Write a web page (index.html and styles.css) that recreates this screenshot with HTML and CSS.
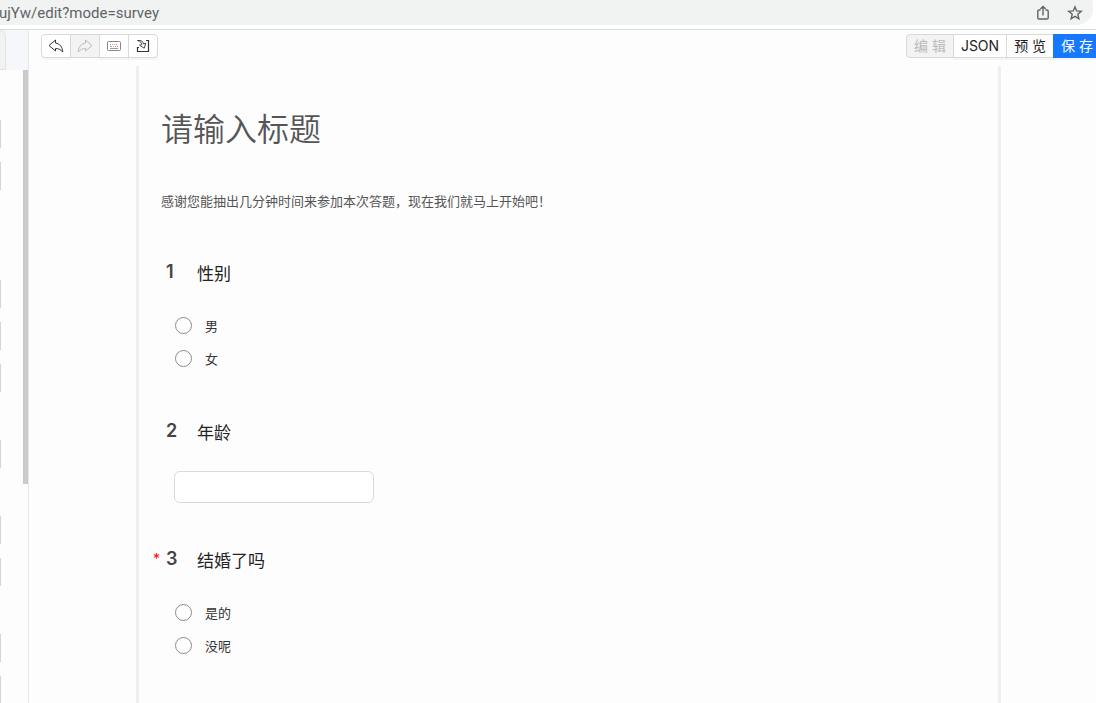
FILE: index.html
```html
<!DOCTYPE html>
<html lang="zh-CN">
<head>
  <meta charset="UTF-8" />
  <meta name="viewport" content="width=device-width, initial-scale=1.0"/>
  <title>survey</title>
  <link rel="stylesheet" href="styles.css">
</head>
<body>

  <header class="browser-bar">
    <div class="address">
      <div class="url"><span>6ujYw/edit?mode=survey</span></div>
      <div class="address-icons">
        <svg width="16" height="16" viewBox="0 0 16 16" fill="none" stroke="#5f6368" stroke-width="1.4">
          <path d="M5.500 5H4q-1.200 0-1.200 1.200v6.600q0 1.200 1.200 1.200h8q1.200 0 1.200-1.200V6.200Q13.200 5 12 5h-1.500M8 10.500V1.600M5.400 4L8 1.400 10.600 4"/>
        </svg>
        <svg width="16" height="16" viewBox="0 0 16 16" fill="none" stroke="#5f6368" stroke-width="1.4">
          <path d="M8 1.900l1.700 4 4.600.400-3.500 3 1.100 4.500L8 11.400l-3.900 2.400 1.100-4.500-3.500-3 4.600-.4z"/>
        </svg>
      </div>
    </div>
  </header>

  <div class="app">
    <aside class="sidebar">
      <div class="tabs"><div class="tab"></div></div>
      <div class="components">
        <div class="list">
          <div class="group first">
            <div class="item"></div>
            <div class="item"></div>
          </div>
          <div class="group">
            <div class="item"></div>
            <div class="item"></div>
            <div class="item"></div>
          </div>
          <div class="group">
            <div class="item"></div>
          </div>
          <div class="group">
            <div class="item"></div>
            <div class="item"></div>
          </div>
          <div class="group">
            <div class="item"></div>
            <div class="item"></div>
          </div>
        </div>
        <div class="scrollbar"></div>
      </div>
    </aside>

    <main class="workspace">
      <div class="toolbar">
        <div class="btn-group">
          <button class="btn icon-btn" aria-label="撤销">
            <svg width="16" height="16" viewBox="0 0 16 16" fill="none" stroke="#333" stroke-width="1" stroke-linejoin="round">
              <path d="M1 7.500L7.500 2v3c4.500.8 7 4 7.200 9-1.700-2.300-4-3.500-7.200-3.500V13z"/>
            </svg>
          </button>
          <button class="btn icon-btn" aria-label="重做" disabled>
            <svg width="16" height="16" viewBox="0 0 16 16" fill="none" stroke="#bbb" stroke-width="1" stroke-linejoin="round">
              <path d="M15 7.500L8.500 2v3c-4.500.8-7 4-7.200 9 1.700-2.300 4-3.500 7.200-3.500V13z"/>
            </svg>
          </button>
          <button class="btn icon-btn" aria-label="快捷键">
            <svg width="16" height="16" viewBox="0 0 16 16" fill="none">
              <rect x="1.500" y="3.500" width="13" height="9" rx="1" stroke="#888"/>
              <path d="M4 6.500h2m4 0h2M4 8.500h1m6 0h1" stroke="#999" stroke-dasharray="1 1"/>
              <path d="M6 6.500h4M5 8.500h6" stroke="#e0a080" stroke-dasharray="1 1"/>
              <path d="M4 10.500h8" stroke="#999"/>
            </svg>
          </button>
          <button class="btn icon-btn" aria-label="导入">
            <svg width="16" height="16" viewBox="0 0 16 16" fill="none" stroke="#333">
              <path d="M4 9.500H2.500V13.500h11V2.500H11" stroke-width="1.200"/>
              <path d="M2.500 2.500c3.500-.5 5.800 1 6 3.500l2.300-.6-1.600 4.800-4.600-3 2.200-.6C6.500 4.500 5 3 2.500 2.500z" stroke-width=".9" stroke-linejoin="round"/>
            </svg>
          </button>
        </div>
        <div class="btn-group modes">
          <button class="btn" disabled>编 辑</button>
          <button class="btn">JSON</button>
          <button class="btn">预 览</button>
          <button class="btn primary">保 存</button>
        </div>
      </div>

      <form class="survey">
        <h1>请输入标题</h1>
        <p class="intro">感谢您能抽出几分钟时间来参加本次答题，现在我们就马上开始吧！</p>

        <fieldset class="question">
          <legend><span class="required"></span><span class="number">1</span><span>性别</span></legend>
          <label class="option"><input type="radio" name="gender">男</label>
          <label class="option"><input type="radio" name="gender">女</label>
        </fieldset>

        <div class="question">
          <label class="title" for="age"><span class="required"></span><span class="number">2</span><span>年龄</span></label>
          <input class="text-input" type="text" id="age">
        </div>

        <fieldset class="question">
          <legend><span class="required">*</span><span class="number">3</span><span>结婚了吗</span></legend>
          <label class="option"><input type="radio" name="married">是的</label>
          <label class="option"><input type="radio" name="married">没呢</label>
        </fieldset>
      </form>
    </main>
  </div>

</body>
</html>
```
FILE: styles.css
```css
* {
  box-sizing: border-box;
}

body {
  margin: 0;
  height: 100vh;
  overflow: hidden;
  display: flex;
  flex-direction: column;
  font-family: Inter, "Noto Sans CJK SC", sans-serif;
  font-size: 13px;
  color: #333;
  background: #fdfdfd;
}

.browser-bar {
  flex: none;
  height: 30px;
  padding-right: 3px;
  border-bottom: 1px solid #d9dbda;
  background: #fff;
}

.address {
  height: 25px;
  padding-right: 10px;
  display: flex;
  align-items: center;
  justify-content: space-between;
  background: #f1f3f2;
  border-radius: 0 0 16px 0;
}

.url {
  width: 159px;
  display: flex;
  justify-content: flex-end;
  white-space: nowrap;
  font-family: Roboto, sans-serif;
  font-size: 15px;
  line-height: 24px;
  color: #5f6368;
}

.address-icons {
  display: flex;
  gap: 16px;
}

.app {
  flex: 1;
  min-height: 0;
  display: flex;
}

.sidebar {
  width: 29px;
  flex: none;
  display: flex;
  flex-direction: column;
  border-right: 1px solid #e8e8e8;
}

.tabs {
  flex: none;
  height: 40px;
  background: #f5f7fa;
}

.tab {
  width: 6px;
  height: 40px;
  background: #f1f3f2;
  border: 1px solid #e2e4e3;
  border-left: none;
  border-radius: 0 6px 0 0;
}

.components {
  flex: 1;
  min-height: 0;
  display: flex;
  justify-content: space-between;
  overflow: hidden;
}

.list {
  padding-top: 50px;
}

.group {
  display: flex;
  flex-direction: column;
  gap: 14px;
  margin-bottom: 48px;
}

.group.first {
  margin-bottom: 90px;
}

.item {
  width: 1px;
  height: 28px;
  background: #d4d4d4;
}

.scrollbar {
  width: 5px;
  height: 414px;
  background: #cacaca;
}

.workspace {
  flex: 1;
  min-width: 0;
  display: flex;
  flex-direction: column;
}

.toolbar {
  flex: none;
  display: flex;
  justify-content: space-between;
  padding: 4px 0 8px 12px;
}

.btn-group {
  display: flex;
}

.btn {
  height: 24px;
  margin: 0 0 0 -1px;
  padding: 0 7px;
  display: flex;
  align-items: center;
  justify-content: center;
  white-space: nowrap;
  font-family: inherit;
  font-size: 14px;
  line-height: 20px;
  color: #222;
  background: #fff;
  border: 1px solid #d9d9d9;
  box-shadow: 0 2px 0 rgba(0, 0, 0, 0.03);
  cursor: pointer;
}

.btn:first-child {
  margin-left: 0;
  border-radius: 4px 0 0 4px;
}

.btn:last-child {
  border-radius: 0 4px 4px 0;
}

.btn:disabled {
  color: #bbb;
  background: #f2f3f2;
  box-shadow: none;
  cursor: not-allowed;
}

.icon-btn {
  width: 30px;
  padding: 0;
}

.btn.primary {
  padding-right: 2px;
  color: #fff;
  background: #1677ff;
  border-color: #1677ff;
  border-radius: 0;
}

.survey {
  flex: 1;
  min-height: 0;
  margin: 0 95px 0 107px;
  padding: 0 22px;
  overflow: hidden;
  border: solid #efefef;
  border-width: 0 3px;
}

h1 {
  margin: 40px 0 0;
  font-size: 32px;
  font-weight: 350;
  line-height: 48px;
  color: #555;
}

.intro {
  margin: 37px 0 0;
  padding-bottom: 5px;
  line-height: 20px;
  color: #555;
}

.question {
  margin: 44px 0 0;
  padding: 0;
  border: none;
}

legend,
.title {
  display: flex;
  align-items: flex-start;
  margin-left: -8px;
  padding: 0;
  font-size: 17px;
  line-height: 28px;
  color: #222;
}

.required {
  width: 13px;
  font-size: 14px;
  line-height: 24px;
  color: #f00;
}

.number {
  width: 31px;
  font-size: 18px;
  font-weight: 600;
  line-height: 24px;
  color: #444;
}

.option {
  display: flex;
  align-items: center;
  gap: 13px;
  height: 33px;
  padding-left: 14px;
}

legend + .option {
  margin-top: 21px;
}

.option input {
  appearance: none;
  width: 17px;
  height: 17px;
  margin: 0;
  border: 1px solid #8c8c8c;
  border-radius: 50%;
  background: #fff;
}

.text-input {
  display: block;
  width: 200px;
  height: 32px;
  margin: 24px 0 0 13px;
  padding: 4px 11px;
  border: 1px solid #d9d9d9;
  border-radius: 6px;
  background: #fff;
  font: inherit;
}
```
